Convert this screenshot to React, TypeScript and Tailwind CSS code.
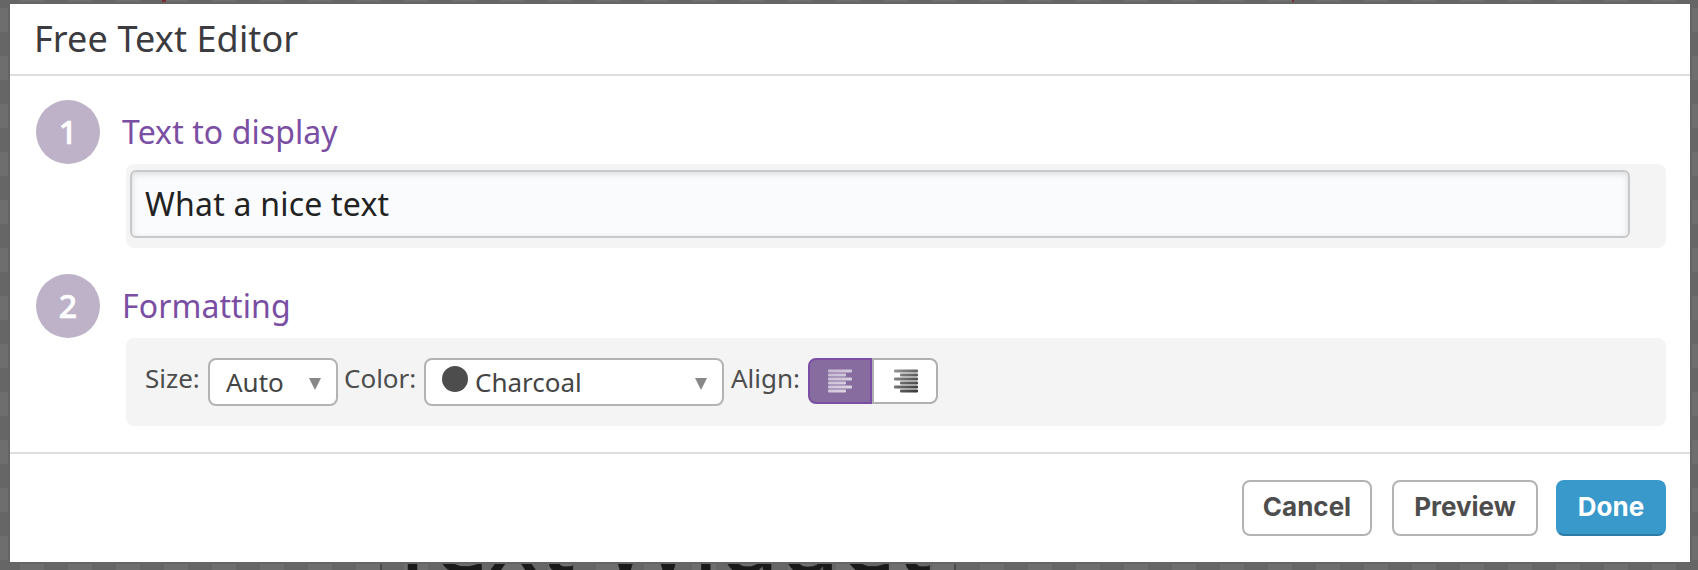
import React from "react";

function Step({ n, title, children }: { n: number; title: string; children: React.ReactNode }) {
  return (
    <section className="flex">
      <div className="flex h-16 w-16 shrink-0 items-center justify-center rounded-full bg-[#bdb2c8] text-[32px] leading-[64px] font-medium text-white [-webkit-text-stroke:0.7px_white]">
        {n}
      </div>
      <div className="ml-[22px] grow">
        <h2 className="h-16 text-[32px] leading-[63px] tracking-[0.08px] text-[#7a4ea3]">{title}</h2>
        <div className="ml-1 rounded-lg bg-[#f4f4f4]">{children}</div>
      </div>
    </section>
  );
}

function Bars({ right, from, to, id }: { right?: boolean; from: string; to: string; id: string }) {
  return (
    <svg width="24" height="24" viewBox="0 0 24 24">
      <defs>
        <linearGradient id={id} x1="0" y1="0" x2="24" y2="24" gradientUnits="userSpaceOnUse">
          <stop offset="0" stopColor={from} />
          <stop offset="1" stopColor={to} />
        </linearGradient>
      </defs>
      {[0, 1, 2, 3, 4, 5].map((i) => (
        <rect key={i} x={right && i % 2 ? 6 : 0} y={i * 4 + 0.6} width={i % 2 ? 18 : 24} height="2.8" rx="0.8" fill={`url(#${id})`} />
      ))}
    </svg>
  );
}

function Arrow() {
  return (
    <svg width="12" height="12" viewBox="0 0 12 12" className="mt-1 shrink-0">
      <path d="M0 0H12L6 12Z" fill="#888" />
    </svg>
  );
}

export default function App() {
  return (
    <div className="relative h-[570px] w-[1698px] overflow-hidden bg-[#6a6a6a] bg-[repeating-conic-gradient(#666_0_25%,#6e6e6e_0_50%)] bg-[length:48px_48px] bg-[position:-4px_8px] px-2 pt-0.5 font-['Noto_Sans',sans-serif]">
      <div className="absolute top-0 left-[162px] h-0.5 w-1 bg-[#7d2e33]" />
      <div className="absolute top-0 left-[1292px] h-0.5 w-0.5 bg-[#7d2e33]" />
      <div className="absolute top-[463px] left-[385px] text-[99px] leading-[144px] whitespace-nowrap text-[#1a1a1a] [-webkit-text-stroke:0.6px_#1a1a1a]">Text Widget</div>
      <div className="absolute bottom-0 left-[380px] h-1.5 w-0.5 bg-[#4a4a4a]" />
      <div className="absolute bottom-0 left-[954px] h-1.5 w-0.5 bg-[#4a4a4a]" />
      <div className="relative flex h-[562px] w-[1684px] flex-col border-2 border-[#656565] bg-white">
        <header className="h-[72px] border-b-2 border-[#ddd] pl-6 text-[36px] leading-[70px] tracking-[0.12px] text-[#3b3b40]">Free Text Editor</header>
        <main className="flex h-[376px] flex-col gap-[26px] pt-6 pr-6 pl-[26px]">
          <Step n={1} title="Text to display">
            <div className="h-[84px] pt-1.5 pl-1">
              <div className="h-[68px] w-[1500px] rounded-md border-2 border-[#c9c9c9] bg-[#fafbfd] pl-[13px] text-[32px] leading-[64px] tracking-[0.22px] text-[#222] shadow-[inset_0_2px_6px_rgba(0,0,0,0.13)]">
                What a nice text
              </div>
            </div>
          </Step>
          <Step n={2} title="Formatting">
            <div className="flex h-[88px] items-start pt-5 pl-[19px] text-[26px] leading-[40px] text-[#4d4d4d]">
              <span className="w-[63px]">Size:</span>
              <div className="flex h-12 w-[130px] items-center justify-between rounded-lg border-2 border-[#b3b3b3] bg-white pr-[15px] pl-4 text-[#444]">
                <span className="leading-[44px]">Auto</span>
                <Arrow />
              </div>
              <span className="ml-1.5 w-20">Color:</span>
              <div className="flex h-12 w-[300px] items-center rounded-lg border-2 border-[#b3b3b3] bg-white pr-[15px] pl-4 text-[#444]">
                <span className="mr-[7px] mb-[6px] h-[26px] w-[26px] rounded-full bg-[#4d4d4d]" />
                <span className="grow leading-[44px]">Charcoal</span>
                <Arrow />
              </div>
              <span className="ml-[7px] w-[77px]">Align:</span>
              <div className="flex h-[46px]">
                <div className="flex w-16 items-center justify-center rounded-l-lg border-2 border-[#7a4ea3] bg-[#876c9f]">
                  <Bars id="left" from="#c5b8d0" to="#e0d9e6" />
                </div>
                <div className="flex w-[66px] items-center justify-center rounded-r-lg border-2 border-[#b0b0b0] bg-white pl-0.5">
                  <Bars id="right" right from="#999" to="#333" />
                </div>
              </div>
            </div>
          </Step>
        </main>
        <footer className="flex grow items-start justify-end border-t-2 border-[#ddd] pt-[26px] pr-6 font-['Inter',sans-serif] text-[26px] leading-[48px] font-bold text-[#4d4d4d]">
          <button className="h-14 w-[130px] rounded-lg border-2 border-[#b3b3b3] pb-0.5 font-bold">Cancel</button>
          <button className="ml-5 h-14 w-[146px] rounded-lg border-2 border-[#b3b3b3] pb-0.5 font-bold">Preview</button>
          <button className="ml-[18px] h-14 w-[110px] rounded-lg border-2 border-[#3a99cb] border-b-[#2d7ca6] bg-[#3a99cb] pb-0.5 font-bold text-white">Done</button>
        </footer>
      </div>
    </div>
  );
}
